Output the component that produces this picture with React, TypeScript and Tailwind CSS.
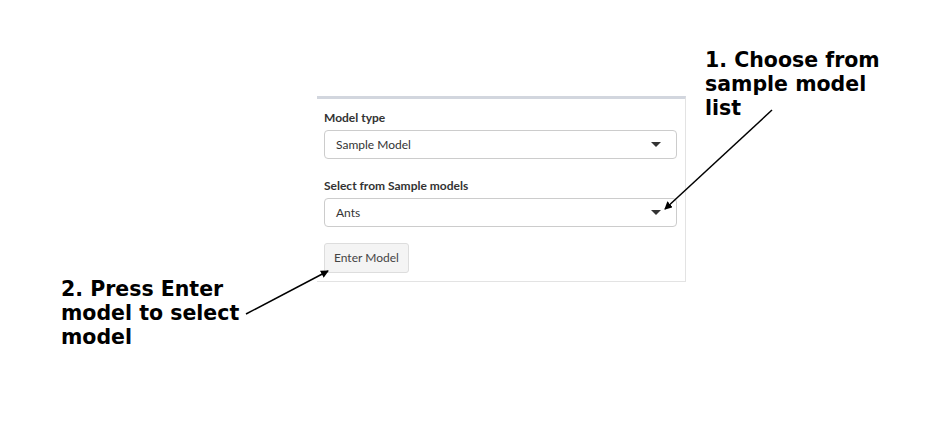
import React from 'react';

const Caret: React.FC = () => (
  <svg width="10" height="6" viewBox="0 0 10 6" className="shrink-0">
    <path d="M0 0 L10 0 L5 5 Z" fill="#333" />
  </svg>
);

const SelectBox: React.FC<{ value: string }> = ({ value }) => (
  <div className="h-[29px] w-[353px] rounded-[4px] border border-[#cccccc] bg-white flex items-center justify-between pl-[11px] pr-[15px] text-[12px] text-[#333]">
    <span>{value}</span>
    <Caret />
  </div>
);

const App: React.FC = () => {
  return (
    <div className="relative w-[929px] h-[441px] bg-white overflow-hidden" style={{ fontFamily: 'Lato, "Open Sans", sans-serif' }}>
      {/* panel */}
      <div className="pt-[96px] pl-[317px]">
        <div className="w-[369px] border-t-[3px] border-t-[#d2d6de] border-r border-b border-[#e3e3e3] pl-[7px] pt-[10px] pb-[8px]">
          <div className="text-[12px] font-bold text-[#333] leading-[17px] mb-[4px]">Model type</div>
          <SelectBox value="Sample Model" />
          <div className="text-[12px] font-bold text-[#333] leading-[17px] mt-[18px] mb-[4px]">Select from Sample models</div>
          <SelectBox value="Ants" />
          <button className="mt-[16px] h-[30px] px-[9px] rounded-[3px] border border-[#dddddd] bg-[#f4f4f4] text-[12px] text-[#444]">
            Enter Model
          </button>
        </div>
      </div>

      {/* annotations */}
      <div
        className="absolute left-[705px] top-[48px] text-[20.5px] leading-[24px] font-bold text-black"
        style={{ fontFamily: '"DejaVu Sans", sans-serif' }}
      >
        1. Choose from<br />sample model<br />list
      </div>
      <div
        className="absolute left-[61px] top-[277px] text-[20.5px] leading-[24px] font-bold text-black"
        style={{ fontFamily: '"DejaVu Sans", sans-serif' }}
      >
        2. Press Enter<br />model to select<br />model
      </div>

      <svg className="absolute inset-0 pointer-events-none" width="929" height="441">
        <defs>
          <marker id="ah" markerWidth="8" markerHeight="8" refX="7" refY="4" orient="auto" markerUnits="userSpaceOnUse">
            <path d="M0 0 L8 4 L0 8 Z" fill="#000" />
          </marker>
        </defs>
        <line x1="772" y1="110" x2="665" y2="209" stroke="#000" strokeWidth="1.5" markerEnd="url(#ah)" />
        <line x1="246" y1="314" x2="328" y2="271" stroke="#000" strokeWidth="1.5" markerEnd="url(#ah)" />
      </svg>
    </div>
  );
};

export default App;
